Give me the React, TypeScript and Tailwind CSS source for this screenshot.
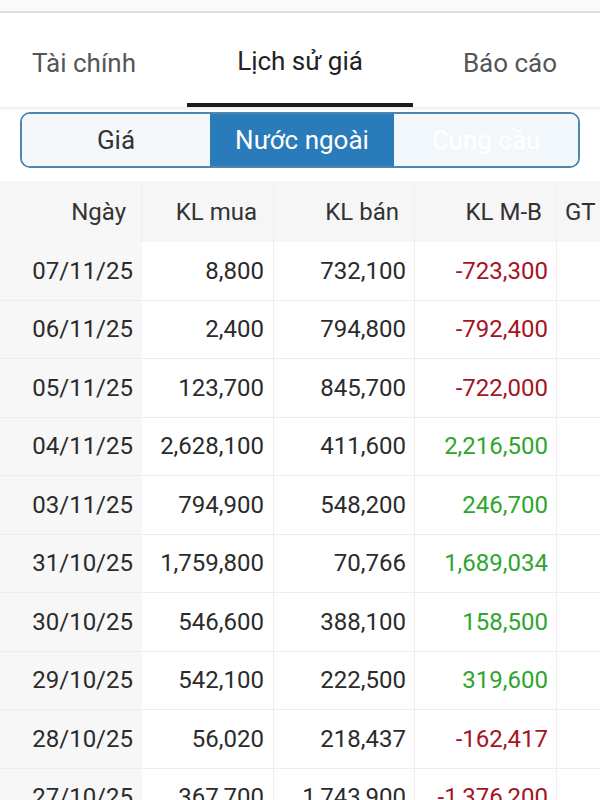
import React from "react";

const rows = [
    { d: "07/11/25", buy: "8,800", sell: "732,100", net: "-723,300" },
    { d: "06/11/25", buy: "2,400", sell: "794,800", net: "-792,400" },
    { d: "05/11/25", buy: "123,700", sell: "845,700", net: "-722,000" },
    { d: "04/11/25", buy: "2,628,100", sell: "411,600", net: "2,216,500" },
    { d: "03/11/25", buy: "794,900", sell: "548,200", net: "246,700" },
    { d: "31/10/25", buy: "1,759,800", sell: "70,766", net: "1,689,034" },
    { d: "30/10/25", buy: "546,600", sell: "388,100", net: "158,500" },
    { d: "29/10/25", buy: "542,100", sell: "222,500", net: "319,600" },
    { d: "28/10/25", buy: "56,020", sell: "218,437", net: "-162,417" },
    { d: "27/10/25", buy: "367,700", sell: "1,743,900", net: "-1,376,200" },
];

const cols = "grid grid-cols-[142px_132px_141px_142px_43px]";

export default function App() {
    return (
        <div className="w-[600px] h-[800px] overflow-hidden bg-white text-[24px] text-[#2b2b2b] font-['Roboto',sans-serif]">
            {/* status strip */}
            <div className="h-[13px] bg-[#fafafa] border-b-2 border-[#dddddd]" />

            {/* Top tabs */}
            <div className="relative grid grid-cols-[168px_264px_168px] h-[94px] bg-white text-[26px] shadow-[0_2px_3px_rgba(0,0,0,0.08)]">
                <div className="flex items-center justify-center pt-[6px] text-[#555]">Tài chính</div>
                <div className="flex flex-col">
                    <div className="flex-1 flex items-center justify-center pt-[6px] text-[#222]">Lịch sử giá</div>
                    <div className="mx-[19px] h-[4px] bg-[#1c1c1c]" />
                </div>
                <div className="flex items-center justify-center pt-[6px] pr-[12px] text-[#555]">Báo cáo</div>
            </div>

            {/* Segmented control */}
            <div className="mx-[20px] mt-[5px] h-[56px] grid grid-cols-[188px_184px_1fr] rounded-[10px] border-2 border-[#4f86ad] overflow-hidden text-[26px]">
                <div className="flex items-center justify-center bg-[#f5f8fa] text-[#333]">Giá</div>
                <div className="flex items-center justify-center bg-[#2a7bb9] text-white">Nước ngoài</div>
                <div className="flex items-center justify-center bg-[#f2f7fb] text-white">Cung cầu</div>
            </div>

            {/* Table */}
            <div className="mt-[13px]">
                <div className={`${cols} h-[61px] bg-[#f6f6f6] text-[#333]`}>
                    <div className="flex items-center justify-end pr-[15px] border-r border-[#eeeeee]">Ngày</div>
                    <div className="flex items-center justify-end pr-[16px] border-r border-[#eeeeee]">KL mua</div>
                    <div className="flex items-center justify-end pr-[15px] border-r border-[#eeeeee]">KL bán</div>
                    <div className="flex items-center justify-end pr-[14px] border-r border-[#eeeeee]">KL M-B</div>
                    <div className="flex items-center pl-[8px] whitespace-nowrap">GT</div>
                </div>
                {rows.map((r) => (
                    <div key={r.d} className={`${cols} h-[58.5px] border-b border-[#eeeeee]`}>
                        <div className="flex items-center justify-end pr-[9px] bg-[#f7f7f7]">{r.d}</div>
                        <div className="flex items-center justify-end pr-[9px] border-r border-[#eeeeee]">{r.buy}</div>
                        <div className="flex items-center justify-end pr-[8px] border-r border-[#eeeeee]">{r.sell}</div>
                        <div
                            className={`flex items-center justify-end pr-[8px] border-r border-[#eeeeee] ${
                                r.net.startsWith("-") ? "text-[#a5141f]" : "text-[#2ea52e]"
                            }`}
                        >
                            {r.net}
                        </div>
                        <div />
                    </div>
                ))}
            </div>
        </div>
    );
}
